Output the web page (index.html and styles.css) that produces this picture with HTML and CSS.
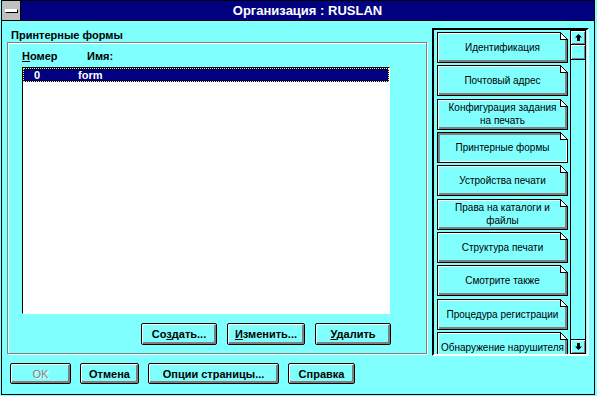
FILE: index.html
```html
<!DOCTYPE html>
<html>
<head>
<meta charset="utf-8">
<link rel="stylesheet" href="styles.css">
</head>
<body>
<div class="window">
    <div class="titlebar">
        <div class="sysmenu"><span class="sysbar"></span></div>
        <div class="title">Организация : RUSLAN</div>
    </div>
    <div class="content">
        <div class="main">
            <div class="left">
                <div class="group-label">Принтерные формы</div>
                <div class="group">
                    <div class="list-head">
                        <span class="head-num"><u>Н</u>омер</span>
                        <span class="head-name">Имя:</span>
                    </div>
                    <div class="listbox">
                        <div class="row selected">
                            <span class="row-num">0</span>
                            <span class="row-name">form</span>
                        </div>
                    </div>
                    <div class="group-buttons">
                        <button class="btn btn-create">Со<u>з</u>дать...</button>
                        <button class="btn btn-edit"><u>И</u>зменить...</button>
                        <button class="btn btn-delete"><u>У</u>далить</button>
                    </div>
                </div>
            </div>
            <div class="panel">
                <div class="tabs">
                    <div class="tab">Идентификация</div>
                    <div class="tab">Почтовый адрес</div>
                    <div class="tab">Конфигурация задания<br>на печать</div>
                    <div class="tab active">Принтерные формы</div>
                    <div class="tab">Устройства печати</div>
                    <div class="tab">Права на каталоги и<br>файлы</div>
                    <div class="tab">Структура печати</div>
                    <div class="tab">Смотрите также</div>
                    <div class="tab">Процедура регистрации</div>
                    <div class="tab">Обнаружение нарушителя</div>
                </div>
                <div class="scrollbar">
                    <div class="sb-btn sb-up">
                        <svg width="7" height="7" viewBox="0 0 7 7"><polygon points="3.5,0 7,3.5 5,3.5 5,7 2,7 2,3.5 0,3.5" fill="#000"/></svg>
                    </div>
                    <div class="sb-thumb"></div>
                    <div class="sb-track"></div>
                    <div class="sb-btn sb-down">
                        <svg width="7" height="7" viewBox="0 0 7 7"><polygon points="3.5,7 7,3.5 5,3.5 5,0 2,0 2,3.5 0,3.5" fill="#000"/></svg>
                    </div>
                </div>
            </div>
        </div>
        <div class="footer">
            <button class="btn btn-low btn-ok" disabled>OK</button>
            <button class="btn btn-low btn-cancel">Отмена</button>
            <button class="btn btn-low btn-options">Опции страницы...</button>
            <button class="btn btn-low btn-help">Справка</button>
        </div>
    </div>
</div>
</body>
</html>
```

FILE: styles.css
```css
* {
    box-sizing: border-box;
}

html, body {
    margin: 0;
    background: #80ffff;
}

body {
    font-family: "Liberation Sans", Arial, sans-serif;
    font-size: 11px;
    color: #000;
}

.window {
    margin-left: 1px;
    width: 594px;
    height: 395px;
    border: 1px solid #000;
    display: flex;
    flex-direction: column;
}

/* title bar */
.titlebar {
    height: 20px;
    display: flex;
    background: #000080;
    border-bottom: 1px solid #000;
}

.sysmenu {
    width: 19px;
    background: #c0c0c0;
    border-right: 1px solid #000;
    display: flex;
    align-items: center;
    justify-content: center;
}

.sysbar {
    width: 13px;
    height: 4px;
    background: #fff;
    border: 1px solid #000;
    border-top-color: #fff;
    border-left-color: #fff;
}

.title {
    flex: 1;
    color: #fff;
    font-weight: bold;
    font-size: 13px;
    line-height: 19px;
    text-align: center;
}

/* content */
.content {
    flex: 1;
    padding: 7px 5px 0 5px;
    display: flex;
    flex-direction: column;
}

.main {
    display: flex;
    gap: 5px;
}

.left {
    width: 420px;
}

.group-label {
    font-weight: bold;
    line-height: 14px;
    margin-left: 4px;
}

.group {
    height: 312px;
    border: 1px solid #808080;
    box-shadow: inset 1px 1px 0 #fff, 1px 1px 0 #fff;
    padding: 7px 36px 0 14px;
}

.list-head {
    display: flex;
    font-weight: bold;
    line-height: 13px;
    margin-bottom: 4px;
}

.head-num {
    width: 65px;
}

.listbox {
    height: 247px;
    background: #fff;
    border: 1px solid;
    border-color: #000 #fff #fff #000;
}

.row {
    display: flex;
    height: 14px;
    line-height: 12px;
    font-weight: bold;
    padding-left: 10px;
}

.row.selected {
    background: #000080;
    color: #fff;
    border: 1px dotted #ffff00;
}

.row-num {
    width: 44px;
}

.group-buttons {
    display: flex;
    justify-content: flex-end;
    gap: 10px;
    margin-top: 9px;
    margin-right: -1px;
}

/* buttons */
.btn {
    font-family: "Liberation Sans", Arial, sans-serif;
    font-size: 11px;
    font-weight: bold;
    color: #000;
    height: 22px;
    padding: 0;
    background: #80ffff;
    border: 1px solid #000;
    border-radius: 2px;
    box-shadow: inset 1px 1px 0 #fff, inset -2px -2px 0 #808080;
}

.btn u {
    text-decoration-thickness: 1px;
    text-underline-offset: 1px;
}

.btn-create { width: 76px; }
.btn-edit { width: 78px; }
.btn-delete { width: 76px; }

.btn-low {
    height: 21px;
}

.btn-ok {
    width: 61px;
    color: #808080;
    font-weight: normal;
    text-shadow: 1px 1px 0 #fff;
}

.btn-cancel { width: 59px; }
.btn-options { width: 131px; }
.btn-help { width: 67px; }

.footer {
    display: flex;
    gap: 9px;
    margin-top: 7px;
    margin-left: 3px;
}

/* right side page list */
.panel {
    width: 157px;
    height: 328px;
    display: flex;
    gap: 2px;
    padding: 0 1px 0 3px;
    border: 2px solid;
    border-color: #000 #fff #fff #000;
}

.tabs {
    width: 131px;
    height: 324px;
    padding-top: 2px;
    overflow: hidden;
    display: flex;
    flex-direction: column;
    gap: 2.33px;
}

.tab {
    position: relative;
    flex-shrink: 0;
    height: 31px;
    display: flex;
    align-items: center;
    justify-content: center;
    text-align: center;
    white-space: nowrap;
    font-size: 10px;
    line-height: 13px;
    border: 1px solid #000;
    box-shadow: inset 1px 1px 0 #fff, inset -2px -2px 0 #808080;
}

.tab.active {
    box-shadow: inset 2px 2px 0 #808080, inset -1px -1px 0 #fff;
}

.tab::after {
    content: "";
    position: absolute;
    top: -1px;
    right: -1px;
    width: 8px;
    height: 8px;
    background: linear-gradient(to bottom left, #80ffff 0 44%, #000 44% 56%, #fff 56%);
    box-shadow: inset 1px -1px 0 #000;
}

.scrollbar {
    width: 16px;
    height: 324px;
    border: 1px solid #000;
    display: flex;
    flex-direction: column;
}

.sb-btn {
    height: 14px;
    display: flex;
    align-items: center;
    justify-content: center;
    box-shadow: inset 1px 1px 0 #fff, inset -1px -1px 0 #808080;
}

.sb-up {
    border-bottom: 1px solid #000;
}

.sb-down {
    border-top: 1px solid #000;
}

.sb-thumb {
    height: 15px;
    border-bottom: 1px solid #000;
    box-shadow: inset 1px 1px 0 #fff, inset -1px -1px 0 #808080;
}

.sb-track {
    flex: 1;
}
```
